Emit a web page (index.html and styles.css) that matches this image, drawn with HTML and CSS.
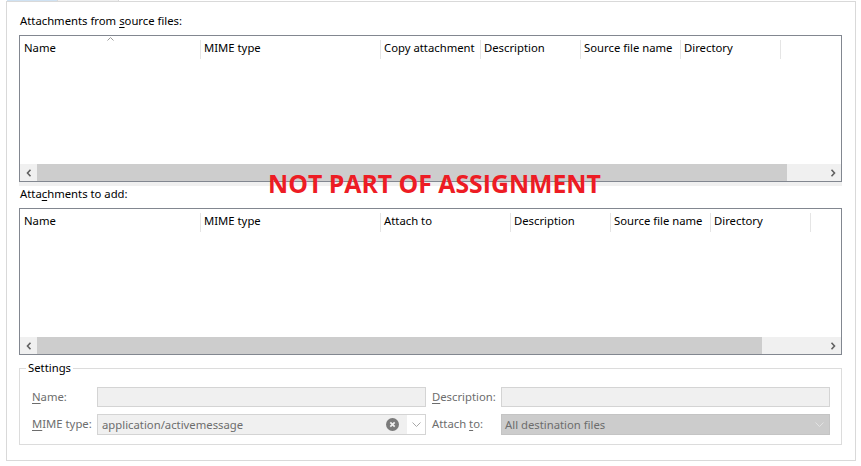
FILE: index.html
```html
<!DOCTYPE html>
<html>
<head>
<meta charset="utf-8">
<link rel="stylesheet" href="styles.css">
</head>
<body>
<div class="tabs">
  <div class="tab tab-active"></div>
  <div class="tab tab-other"></div>
</div>
<div class="panel">
  <div class="label">Attachments from <u>s</u>ource files:</div>
  <div class="list">
    <div class="lv-head">
      <div class="col c-name">Name
        <svg class="sort" width="7" height="4" viewBox="0 0 7 4"><polyline points="0.5,3.5 3.5,0.5 6.5,3.5" fill="none" stroke="#9a9a9a" stroke-width="1"/></svg>
      </div>
      <div class="col c-180">MIME type</div>
      <div class="col c-100">Copy attachment</div>
      <div class="col c-100">Description</div>
      <div class="col c-100">Source file name</div>
      <div class="col c-100">Directory</div>
    </div>
    <div class="lv-body"></div>
    <div class="hscroll">
      <div class="sb-btn"><svg width="6" height="8" viewBox="0 0 6 8"><polyline points="4.5,0.8 1.5,4 4.5,7.2" fill="none" stroke="#606060" stroke-width="1.6"/></svg></div>
      <div class="sb-track"><div class="sb-thumb" style="width:750px"></div></div>
      <div class="sb-btn"><svg width="6" height="8" viewBox="0 0 6 8"><polyline points="1.5,0.8 4.5,4 1.5,7.2" fill="none" stroke="#606060" stroke-width="1.6"/></svg></div>
    </div>
  </div>
  <div class="splitter"></div>
  <div class="label">Atta<u>c</u>hments to add:</div>
  <div class="list">
    <div class="lv-head">
      <div class="col c-name">Name</div>
      <div class="col c-180">MIME type</div>
      <div class="col c-130">Attach to</div>
      <div class="col c-100">Description</div>
      <div class="col c-100">Source file name</div>
      <div class="col c-100">Directory</div>
    </div>
    <div class="lv-body"></div>
    <div class="hscroll">
      <div class="sb-btn"><svg width="6" height="8" viewBox="0 0 6 8"><polyline points="4.5,0.8 1.5,4 4.5,7.2" fill="none" stroke="#606060" stroke-width="1.6"/></svg></div>
      <div class="sb-track"><div class="sb-thumb" style="width:725px"></div></div>
      <div class="sb-btn"><svg width="6" height="8" viewBox="0 0 6 8"><polyline points="1.5,0.8 4.5,4 1.5,7.2" fill="none" stroke="#606060" stroke-width="1.6"/></svg></div>
    </div>
  </div>
  <fieldset class="group">
    <legend>Settings</legend>
    <div class="form">
      <div class="flabel"><u>N</u>ame:</div>
      <div class="input"></div>
      <div class="flabel fl2"><u>D</u>escription:</div>
      <div class="input"></div>
      <div class="flabel"><u>M</u>IME type:</div>
      <div class="combo">
        <div class="combo-text">application/activemessage
          <svg class="clear" width="13" height="13" viewBox="0 0 13 13"><circle cx="6.5" cy="6.5" r="6.5" fill="#7b7b7b"/><path d="M4.3 4.3 L8.7 8.7 M8.7 4.3 L4.3 8.7" stroke="#f0f0f0" stroke-width="1.7"/></svg>
        </div>
        <div class="combo-btn"><svg width="9" height="5" viewBox="0 0 9 5"><polyline points="0.5,0.5 4.5,4.5 8.5,0.5" fill="none" stroke="#a8a8a8" stroke-width="1"/></svg></div>
      </div>
      <div class="flabel fl2">Attach <u>t</u>o:</div>
      <div class="select">
        <span>All destination files</span>
        <svg width="9" height="5" viewBox="0 0 9 5"><polyline points="0.5,0.5 4.5,4.5 8.5,0.5" fill="none" stroke="#e2e2e2" stroke-width="1"/></svg>
      </div>
    </div>
  </fieldset>
  <div class="stamp">NOT PART OF ASSIGNMENT</div>
</div>
</body>
</html>
```
FILE: styles.css
```css
html, body {
  margin: 0;
  padding: 0;
  background: #ffffff;
}
body {
  width: 861px;
  height: 466px;
  overflow: hidden;
  font-family: "Segoe UI", "Noto Sans", sans-serif;
  font-size: 11.3px;
  color: #000;
}
u {
  text-decoration: underline;
  text-underline-offset: 2px;
}
.tabs {
  display: flex;
  height: 1px;
  padding-left: 7px;
}
.tab-active {
  width: 50px;
  background: #cfe2f3;
}
.tab-other {
  width: 60px;
  background: #f0f0f0;
  border-left: 1px solid #d9d9d9;
  border-right: 1px solid #d9d9d9;
}
.panel {
  position: relative;
  margin-left: 6px;
  width: 823px;
  height: 447px;
  border: 1px solid #d9d9d9;
  padding: 11px 13px 0 12px;
}
.label {
  line-height: 16px;
  height: 16px;
  padding-left: 1px;
  margin-bottom: 6px;
}
.list {
  width: 821px;
  height: 145px;
  border: 1px solid #828790;
  display: flex;
  flex-direction: column;
}
.lv-head {
  display: flex;
  height: 23px;
  padding-top: 4px;
  box-sizing: border-box;
}
.col {
  position: relative;
  line-height: 15px;
  height: 19px;
  box-sizing: border-box;
  padding-left: 3px;
  border-right: 1px solid #e5e5e5;
  white-space: nowrap;
}
.c-name { width: 181px; padding-left: 4px; }
.c-180 { width: 180px; }
.c-130 { width: 130px; }
.c-100 { width: 100px; }
.sort {
  position: absolute;
  left: 87px;
  top: -3px;
}
.lv-body {
  flex: 1;
}
.hscroll {
  display: flex;
  height: 17px;
  background: #f0f0f0;
}
.sb-btn {
  width: 17px;
  display: flex;
  align-items: center;
  justify-content: center;
}
.sb-track {
  flex: 1;
  display: flex;
}
.sb-thumb {
  background: #cdcdcd;
  height: 100%;
}
.splitter {
  width: 823px;
  height: 4px;
  background: #f0f0f0;
}
.group {
  margin: 5px 0 0 0;
  padding: 11px 11px 10px 6px;
  width: 823px;
  box-sizing: border-box;
  border: 1px solid #dcdcdc;
  min-width: 0;
}
.group legend {
  padding: 0 2px;
  line-height: 16px;
  color: #000;
}
.form {
  display: grid;
  grid-template-columns: 65px 329px 75px 329px;
  grid-template-rows: 20px 20px;
  row-gap: 7px;
  padding-left: 6px;
  align-items: center;
}
.flabel {
  color: #6d6d6d;
  line-height: 16px;
  white-space: nowrap;
}
.fl2 {
  padding-left: 6px;
}
.input {
  height: 20px;
  box-sizing: border-box;
  background: #f0f0f0;
  border: 1px solid #d4d4d4;
}
.combo {
  height: 21px;
  box-sizing: border-box;
  border: 1px solid #d4d4d4;
  display: flex;
  background: #fff;
}
.combo-text {
  flex: 1;
  background: #f0f0f0;
  color: #6d6d6d;
  line-height: 19px;
  padding-left: 4px;
  display: flex;
  align-items: center;
  justify-content: space-between;
  padding-right: 8px;
  white-space: nowrap;
}
.combo-btn {
  width: 18px;
  display: flex;
  align-items: center;
  justify-content: center;
}
.select {
  height: 21px;
  box-sizing: border-box;
  border: 1px solid #c4c4c4;
  background: #cccccc;
  color: #6d6d6d;
  display: flex;
  align-items: center;
  justify-content: space-between;
  padding: 0 5px 0 3px;
  white-space: nowrap;
}
.stamp {
  position: absolute;
  left: 261px;
  top: 166px;
  font-family: "Open Sans", sans-serif;
  font-weight: 700;
  font-size: 24.8px;
  line-height: 30px;
  color: #ed1c24;
  white-space: nowrap;
}
```
